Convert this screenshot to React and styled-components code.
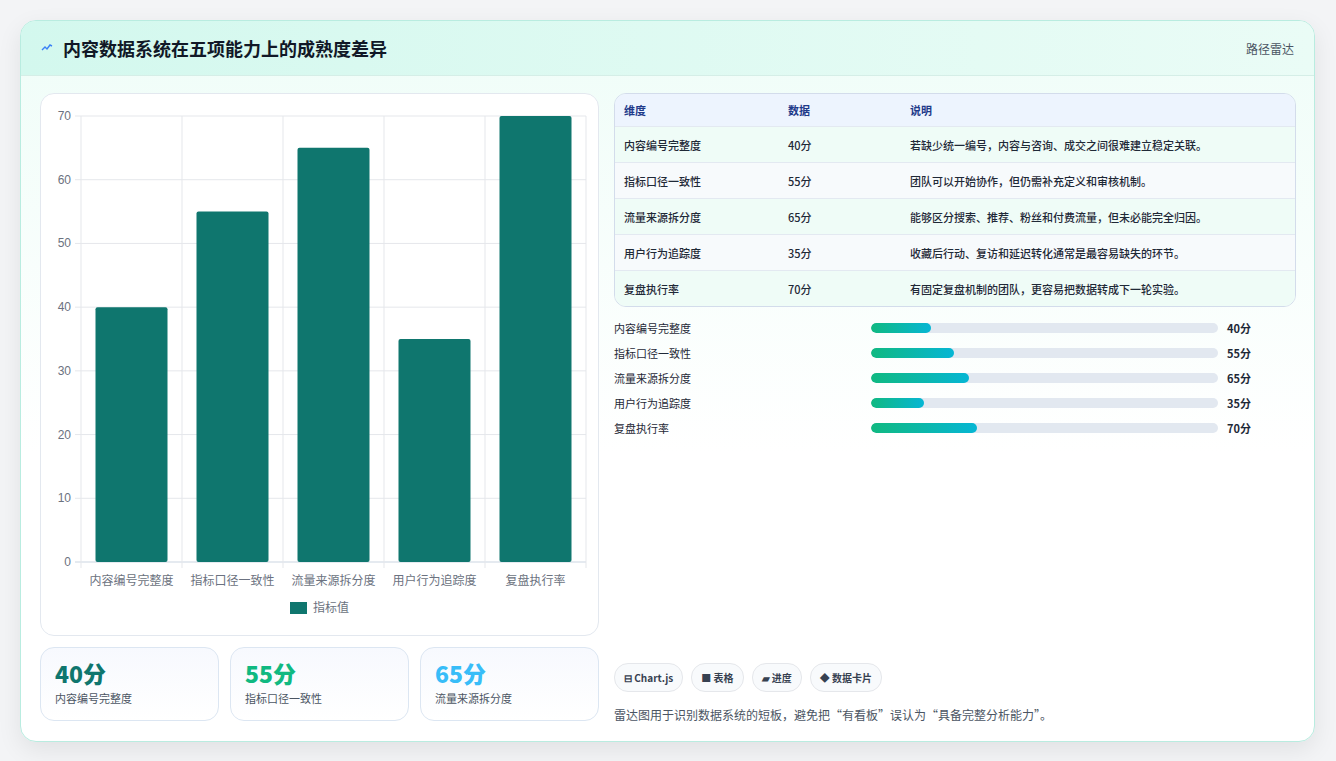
import styled, { createGlobalStyle } from 'styled-components';

const rows = [
  { name: '内容编号完整度', v: 40, note: '若缺少统一编号，内容与咨询、成交之间很难建立稳定关联。' },
  { name: '指标口径一致性', v: 55, note: '团队可以开始协作，但仍需补充定义和审核机制。' },
  { name: '流量来源拆分度', v: 65, note: '能够区分搜索、推荐、粉丝和付费流量，但未必能完全归因。' },
  { name: '用户行为追踪度', v: 35, note: '收藏后行动、复访和延迟转化通常是最容易缺失的环节。' },
  { name: '复盘执行率', v: 70, note: '有固定复盘机制的团队，更容易把数据转成下一轮实验。' },
];

const Global = createGlobalStyle`
  body { margin: 0; background: #f3f4f6; font-family: "Noto Sans CJK SC", "Noto Sans", sans-serif; }
`;

const Page = styled.div`
  width: 1336px; height: 761px; padding: 20px 21px 21px 20px; box-sizing: border-box;
`;

const Card = styled.div`
  height: 720px; border: 1px solid #b9ece0; border-radius: 16px; overflow: hidden;
  background: linear-gradient(180deg, #effdf8 0%, #ffffff 60%);
  box-shadow: 0 8px 24px rgba(0,0,0,0.08);
  display: flex; flex-direction: column;
`;

const Header = styled.div`
  height: 54px; flex: none; display: flex; align-items: center; justify-content: space-between;
  padding: 0 20px; background: linear-gradient(90deg, #d3f8ee, #eafcf6);
  border-bottom: 1px solid #d5eee7;
`;

const Title = styled.h1`
  margin: 0; font-size: 18px; font-weight: 700; color: #111827; display: flex; align-items: center; gap: 10px;
`;

const Tag = styled.span`font-size: 12px; color: #4b5563;`;

const Body = styled.div`
  flex: 1; display: grid; grid-template-columns: 559px 1fr; gap: 15px; padding: 17px 18px 18px 19px;
`;

const Left = styled.div`display: flex; flex-direction: column; gap: 11px;`;

const ChartBox = styled.div`
  height: 543px; box-sizing: border-box; background: #fff; border: 1px solid #e3e8ef; border-radius: 14px;
`;

const Stats = styled.div`display: grid; grid-template-columns: repeat(3, 1fr); gap: 11px;`;

const Stat = styled.div`
  height: 74px; box-sizing: border-box; border: 1px solid #dce6f2; border-radius: 14px; padding: 10px 14px;
  background: linear-gradient(180deg, #f7f9fe, #ffffff);
`;

const StatNum = styled.div`font-size: 23px; font-weight: 800; color: ${p => p.$c}; line-height: 30px;`;
const StatLabel = styled.div`font-size: 11px; color: #4b5563; margin-top: 2px;`;

const Right = styled.div`display: flex; flex-direction: column;`;

const Table = styled.div`
  border: 1px solid #d3dceb; border-radius: 12px; overflow: hidden; font-size: 11px; color: #1f2937;
`;

const Tr = styled.div`
  display: grid; grid-template-columns: 164px 122px 1fr; align-items: center; padding-left: 9px;
  height: ${p => (p.$head ? 32 : 35)}px;
  background: ${p => (p.$head ? '#edf4fe' : p.$alt ? '#f7fafc' : '#effcf7')};
  border-top: ${p => (p.$head ? 'none' : '1px solid #e3e9f1')};
  color: ${p => (p.$head ? '#1e3a8a' : '#1f2937')};
  font-weight: ${p => (p.$head ? 700 : 500)};
`;

const Bars = styled.div`display: flex; flex-direction: column; gap: 9px; margin-top: 13px;`;

const BarRow = styled.div`
  display: grid; grid-template-columns: 257px 355px 1fr; gap: 0; align-items: center; height: 16px;
  font-size: 11px; color: #1f2937;
`;

const Track = styled.div`height: 10px; border-radius: 5px; background: #e2e8f0; overflow: hidden; margin-right: 8px;`;
const Fill = styled.div`height: 100%; border-radius: 5px; background: linear-gradient(90deg, #10b981, #06b6d4);`;
const Val = styled.span`font-weight: 700; padding-left: 1px;`;

const Spacer = styled.div`flex: 1;`;

const Chips = styled.div`display: flex; gap: 8px;`;
const Chip = styled.span`
  height: 27px; padding: 0 9px; border-radius: 14px; border: 1px solid #e5e7eb; background: #f8fafc;
  font-size: 10px; font-weight: 700; color: #374151; display: inline-flex; align-items: center; gap: 3px;
`;

const Note = styled.p`margin: 14px 0 0; font-size: 12px; color: #4b5563;`;

function Chart() {
  const x0 = 40, top = 22, bottom = 468, w = 505, cw = w / 5;
  const y = v => bottom - (v / 70) * (bottom - top);
  return (
    <svg width="557" height="541" style={{ display: 'block' }}>
      {[0, 10, 20, 30, 40, 50, 60, 70].map(t => (
        <g key={t}>
          <line x1={x0 - 6} x2={x0 + w} y1={y(t)} y2={y(t)} stroke={t === 0 ? '#cbd5e1' : '#e5e7eb'} />
          <text x={x0 - 10} y={y(t) + 4} fontSize="12" textAnchor="end" fill="#6b7280" fontFamily="Liberation Sans, sans-serif">{t}</text>
        </g>
      ))}
      {[0, 1, 2, 3, 4, 5].map(i => (
        <line key={i} x1={x0 + i * cw} x2={x0 + i * cw} y1={top} y2={bottom + 6} stroke="#e5e7eb" />
      ))}
      {rows.map((r, i) => (
        <g key={r.name}>
          <rect x={x0 + i * cw + 14.5} y={y(r.v)} width={cw - 29} height={bottom - y(r.v)} rx="2" fill="#0f766e" />
          <text x={x0 + i * cw + cw / 2} y={bottom + 23} fontSize="12" textAnchor="middle" fill="#6b7280">{r.name}</text>
        </g>
      ))}
      <rect x="249" y="508" width="17" height="12" fill="#0f766e" />
      <text x="272" y="518" fontSize="12" fill="#6b7280">指标值</text>
    </svg>
  );
}

export default function App() {
  const colors = ['#0f766e', '#10b981', '#38bdf8'];
  return (
    <Page>
      <Global />
      <Card>
        <Header>
          <Title>
            <svg width="12" height="8" viewBox="0 0 12 8"><path d="M1 6 L4 3 L6 5 L9 1 L11 2" stroke="#3b82f6" strokeWidth="1.4" fill="none" /></svg>
            内容数据系统在五项能力上的成熟度差异
          </Title>
          <Tag>路径雷达</Tag>
        </Header>
        <Body>
          <Left>
            <ChartBox><Chart /></ChartBox>
            <Stats>
              {rows.slice(0, 3).map((r, i) => (
                <Stat key={r.name}>
                  <StatNum $c={colors[i]}>{r.v}分</StatNum>
                  <StatLabel>{r.name}</StatLabel>
                </Stat>
              ))}
            </Stats>
          </Left>
          <Right>
            <Table>
              <Tr $head><span>维度</span><span>数据</span><span>说明</span></Tr>
              {rows.map((r, i) => (
                <Tr key={r.name} $alt={i % 2 === 1}><span>{r.name}</span><span>{r.v}分</span><span>{r.note}</span></Tr>
              ))}
            </Table>
            <Bars>
              {rows.map(r => (
                <BarRow key={r.name}>
                  <span>{r.name}</span>
                  <Track><Fill style={{ width: `${(r.v / 230) * 100}%` }} /></Track>
                  <Val>{r.v}分</Val>
                </BarRow>
              ))}
            </Bars>
            <Spacer />
            <Chips>
              <Chip>⊟ Chart.js</Chip>
              <Chip>■ 表格</Chip>
              <Chip>▰ 进度</Chip>
              <Chip>◆ 数据卡片</Chip>
            </Chips>
            <Note>雷达图用于识别数据系统的短板，避免把“有看板”误认为“具备完整分析能力”。</Note>
          </Right>
        </Body>
      </Card>
    </Page>
  );
}
